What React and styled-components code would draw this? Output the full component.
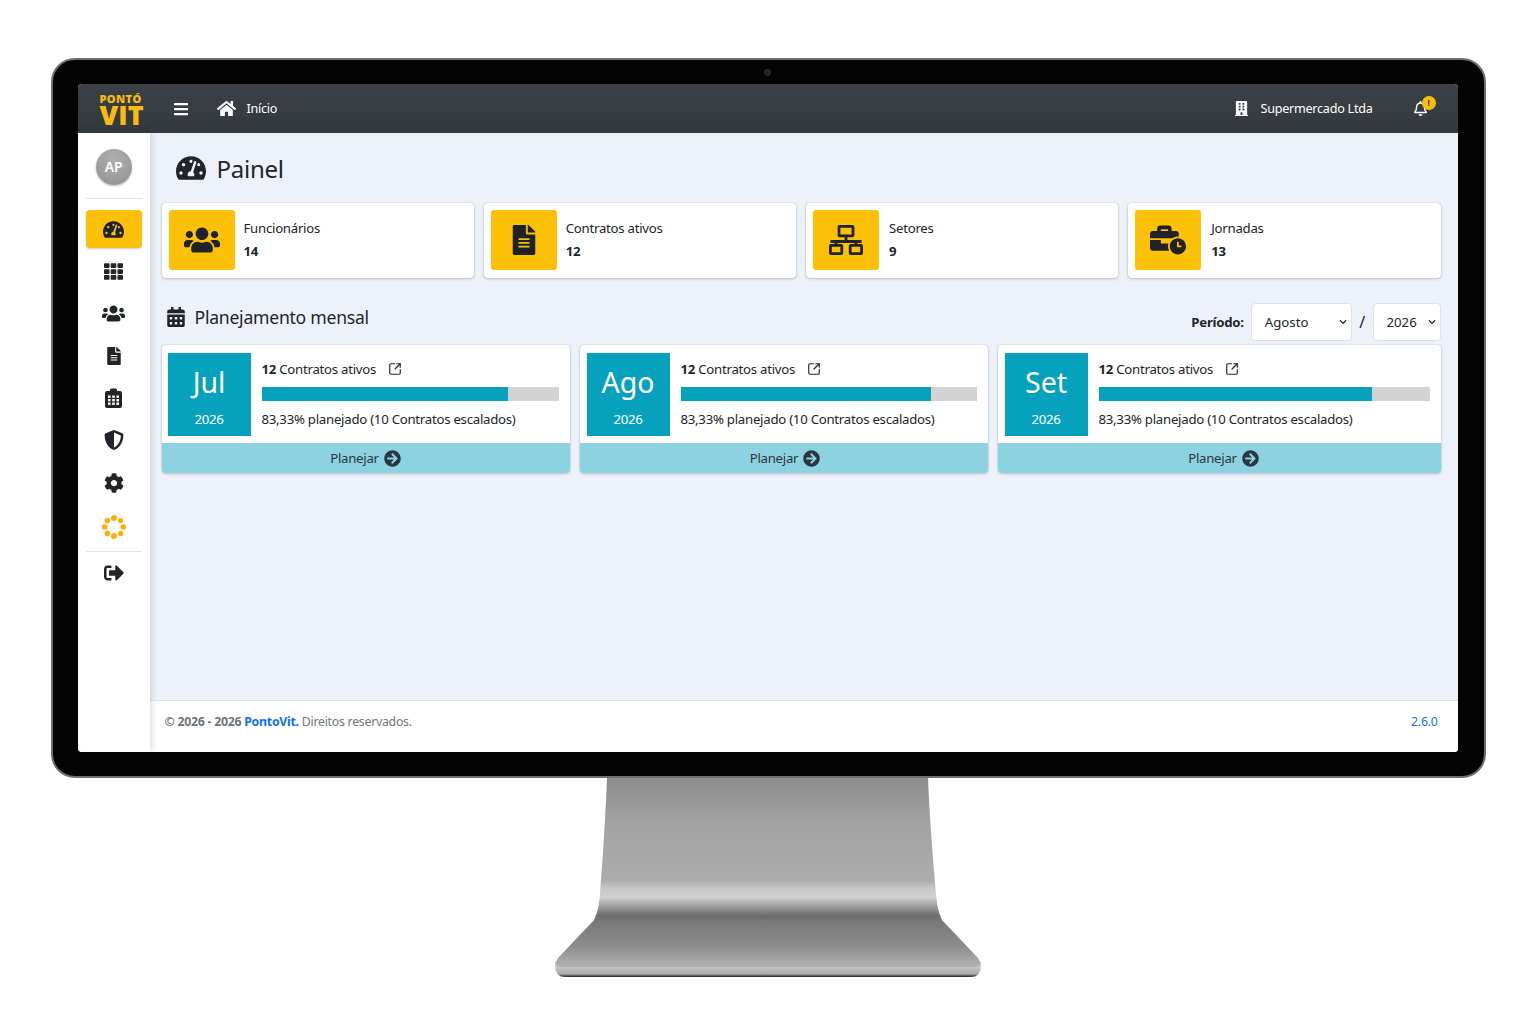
import React from "react";
import styled, { createGlobalStyle } from "styled-components";
import { SquareArrowOutUpRight } from "lucide-react";
import {
  FaArrowCircleRight,
  FaBars,
  FaBuilding,
  FaBusinessTime,
  FaCalendarAlt,
  FaChevronDown,
  FaCog,
  FaFileAlt,
  FaHome,
  FaRegBell,
  FaShieldAlt,
  FaSignOutAlt,
  FaTachometerAlt,
  FaTh,
  FaUsers,
} from "react-icons/fa";

const ClipboardGrid = () => (
  <svg width="17" height="20" viewBox="0 0 17 20" fill="currentColor">
    <path d="M2 3h3V2a1.5 1.5 0 0 1 1.5-1.5h4A1.5 1.5 0 0 1 12 2v1h3a2 2 0 0 1 2 2v13a2 2 0 0 1-2 2H2a2 2 0 0 1-2-2V5a2 2 0 0 1 2-2z" />
    <g fill="#fff">
      <rect x="3" y="7.5" width="2.6" height="2.4" />
      <rect x="7.2" y="7.5" width="2.6" height="2.4" />
      <rect x="11.4" y="7.5" width="2.6" height="2.4" />
      <rect x="3" y="11" width="2.6" height="2.4" />
      <rect x="7.2" y="11" width="2.6" height="2.4" />
      <rect x="11.4" y="11" width="2.6" height="2.4" />
      <rect x="3" y="14.5" width="2.6" height="2.4" />
      <rect x="7.2" y="14.5" width="2.6" height="2.4" />
      <rect x="11.4" y="14.5" width="2.6" height="2.4" />
    </g>
  </svg>
);

const Spinner = () => (
  <svg width="24" height="24" viewBox="0 0 24 24" fill="#ffad0d">
    <circle cx="12" cy="3" r="3" />
    <circle cx="18.6" cy="5.6" r="2.6" />
    <circle cx="21.2" cy="12" r="2.8" />
    <circle cx="18.6" cy="18.4" r="2.6" />
    <circle cx="12" cy="21" r="3" />
    <circle cx="5.4" cy="18.4" r="2.8" />
    <circle cx="2.8" cy="12" r="2.8" />
    <circle cx="5.4" cy="5.6" r="2.8" />
  </svg>
);

// hollow boxes, the icon package only has the filled one
const Network = () => (
  <svg
    width="34"
    height="30"
    viewBox="0 0 34 30"
    fill="none"
    stroke="currentColor"
    strokeWidth="2.8"
  >
    <rect x="10" y="1.4" width="14" height="9.5" rx="0.6" />
    <path d="M17 11v5M1.5 16.5h31M7 16.5v4M27 16.5v4" />
    <rect x="1.4" y="20.4" width="11.4" height="8.2" rx="0.6" />
    <rect x="21.2" y="20.4" width="11.4" height="8.2" rx="0.6" />
  </svg>
);

const StandDrawing = () => (
  <svg width="426" height="199" viewBox="0 0 426 199">
    <defs>
      <linearGradient id="neck" x1="0" y1="0" x2="0" y2="1">
        <stop offset="0" stopColor="#8c8c8c" />
        <stop offset="0.3" stopColor="#a2a2a2" />
        <stop offset="0.72" stopColor="#acacac" />
        <stop offset="0.78" stopColor="#c8c8c8" />
        <stop offset="0.84" stopColor="#d0d0d0" />
        <stop offset="0.9" stopColor="#a0a0a0" />
        <stop offset="0.97" stopColor="#6c6c6c" />
        <stop offset="1" stopColor="#747474" />
      </linearGradient>
      <linearGradient id="base" x1="0" y1="0" x2="0" y2="1">
        <stop offset="0" stopColor="#757575" />
        <stop offset="0.6" stopColor="#8e8e8e" />
        <stop offset="1" stopColor="#b2b2b2" />
      </linearGradient>
      <linearGradient id="rim" x1="0" y1="0" x2="0" y2="1">
        <stop offset="0" stopColor="#d8d8d8" />
        <stop offset="0.8" stopColor="#acacac" />
        <stop offset="1" stopColor="#222" />
      </linearGradient>
    </defs>
    <path
      d="M0 186 Q0 199 10 199 H416 Q426 199 426 186 L426 183 H0 Z"
      fill="url(#rim)"
    />
    <path
      d="M41 140 L3 180 Q-2 189 6 189 H420 Q428 189 423 180 L385 140 Z"
      fill="url(#base)"
    />
    <path
      d="M52 0 H373 C375 50 379 90 381 116 C382 128 384 136 387 142 H39 C42 136 44 128 45 116 C47 90 50 50 52 0 Z"
      fill="url(#neck)"
    />
  </svg>
);

const stats = [
  { label: "Funcionários", value: 14, icon: <FaUsers size={36} /> },
  { label: "Contratos ativos", value: 12, icon: <FaFileAlt size={30} /> },
  { label: "Setores", value: 9, icon: <Network /> },
  { label: "Jornadas", value: 13, icon: <FaBusinessTime size={36} /> },
];

const months = [
  { month: "Jul", inset: 6, fill: 83, nudge: 0 },
  { month: "Ago", inset: 7, fill: 84.5, nudge: 3 },
  { month: "Set", inset: 7, fill: 82.5, nudge: 9 },
];

const navIcons = [
  <FaTachometerAlt size={21} />,
  <FaTh size={19} />,
  <FaUsers size={23} />,
  <FaFileAlt size={18} />,
  <ClipboardGrid />,
  <FaShieldAlt size={20} />,
  <FaCog size={20} />,
  <Spinner />,
];

const App = () => (
  <Page>
    <GlobalStyle />
    <Monitor>
      <Camera />
      <Screen>
        <TopBar>
          <Logo>
            <LogoTop>PONTÓ</LogoTop>
            <LogoBottom>VIT</LogoBottom>
          </Logo>
          <TopLeft>
            <FaBars size={16} />
            <HomeLink>
              <FaHome size={19} />
              <span>Início</span>
            </HomeLink>
          </TopLeft>
          <TopRight>
            <Company>
              <FaBuilding size={15} />
              <span>Supermercado Ltda</span>
            </Company>
            <BellWrap>
              <FaRegBell size={15} />
              <BellBadge>!</BellBadge>
            </BellWrap>
          </TopRight>
        </TopBar>
        <Body>
          <SideBar>
            <Avatar>AP</Avatar>
            <SideRule />
            <NavList>
              {navIcons.map((icon, i) => (
                <NavItem key={i} $active={i === 0}>
                  {icon}
                </NavItem>
              ))}
            </NavList>
            <SideRuleLow />
            <NavItem>
              <FaSignOutAlt size={20} />
            </NavItem>
          </SideBar>
          <Main>
            <Content>
              <PageTitle>
                <FaTachometerAlt size={30} />
                <h1>Painel</h1>
              </PageTitle>
              <StatGrid>
                {stats.map((s) => (
                  <StatCard key={s.label}>
                    <StatIcon>{s.icon}</StatIcon>
                    <StatText>
                      <span>{s.label}</span>
                      <strong>{s.value}</strong>
                    </StatText>
                  </StatCard>
                ))}
              </StatGrid>
              <PlanHeader>
                <PlanTitle>
                  <FaCalendarAlt size={20} />
                  <h2>Planejamento mensal</h2>
                </PlanTitle>
                <Period>
                  <strong>Período:</strong>
                  <SelectWrap $width={101}>
                    <Select defaultValue="Agosto">
                      <option>Julho</option>
                      <option>Agosto</option>
                      <option>Setembro</option>
                    </Select>
                    <FaChevronDown size={8} />
                  </SelectWrap>
                  <Slash>/</Slash>
                  <SelectWrap $width={68}>
                    <Select defaultValue="2026">
                      <option>2025</option>
                      <option>2026</option>
                    </Select>
                    <FaChevronDown size={8} />
                  </SelectWrap>
                </Period>
              </PlanHeader>
              <MonthGrid>
                {months.map((m) => (
                  <MonthCard key={m.month}>
                    <MonthBody $inset={m.inset}>
                      <MonthTile>
                        <span>{m.month}</span>
                        <small>2026</small>
                      </MonthTile>
                      <MonthInfo>
                        <MonthCount>
                          <span>
                            <strong>12</strong> Contratos ativos
                          </span>
                          <SquareArrowOutUpRight size={14} />
                        </MonthCount>
                        <Progress>
                          <ProgressFill style={{ width: `${m.fill}%` }} />
                        </Progress>
                        <MonthNote>
                          83,33% planejado (10 Contratos escalados)
                        </MonthNote>
                      </MonthInfo>
                    </MonthBody>
                    <PlanLink $nudge={m.nudge}>
                      Planejar <FaArrowCircleRight size={17} />
                    </PlanLink>
                  </MonthCard>
                ))}
              </MonthGrid>
            </Content>
            <Footer>
              <span>
                <b>© 2026 - 2026 </b>
                <FooterBrand>PontoVit.</FooterBrand> Direitos reservados.
              </span>
              <Version>2.6.0</Version>
            </Footer>
          </Main>
        </Body>
      </Screen>
    </Monitor>
    <StandDrawing />
  </Page>
);

export default App;

const GlobalStyle = createGlobalStyle`
  * {
    box-sizing: border-box;
  }
  body {
    margin: 0;
    background: #fff;
    font-family: "Noto Sans", "Open Sans", sans-serif;
    font-size: 13.2px;
    letter-spacing: -0.25px;
    color: #212529;
  }
`;

const Page = styled.div`
  width: 1536px;
  height: 1024px;
  padding-top: 58px;
  display: flex;
  flex-direction: column;
  align-items: center;
  background: #fff;

  & > svg {
    display: block;
    overflow: visible;
  }
`;

const Monitor = styled.div`
  position: relative;
  width: 1435px;
  height: 720px;
  padding: 26px 27px;
  background: #040404;
  border: 2px solid #6f6f6f;
  border-radius: 24px;
`;

const Camera = styled.i`
  position: absolute;
  top: 9px;
  left: 711px;
  width: 7px;
  height: 7px;
  border-radius: 50%;
  background: #222;
  border: 1px solid #333;
`;

const Screen = styled.div`
  width: 1380px;
  height: 668px;
  display: flex;
  flex-direction: column;
  margin: -2px 0 0 -2px;
  border-radius: 4px;
  overflow: hidden;
  background: #fff;
`;

const TopBar = styled.header`
  height: 49px;
  flex-shrink: 0;
  display: flex;
  align-items: center;
  background: linear-gradient(#3c4147, #33383d);
  color: #fff;
  font-size: 12.6px;
`;

const Logo = styled.div`
  width: 72px;
  padding: 1px 0 0 22px;
  display: flex;
  flex-direction: column;
  color: #f9bc0d;
  font-family: "Open Sans", sans-serif;
  font-weight: 800;
  letter-spacing: 0;
`;

const LogoTop = styled.span`
  font-size: 11px;
  line-height: 11px;
  letter-spacing: 0.4px;
`;

const LogoBottom = styled.span`
  font-size: 27px;
  line-height: 21px;
`;

const TopLeft = styled.div`
  margin-left: 23px;
  display: flex;
  align-items: center;
  gap: 28px;
`;

const HomeLink = styled.div`
  display: flex;
  align-items: center;
  gap: 11px;
`;

const TopRight = styled.div`
  margin-left: auto;
  padding-right: 30px;
  display: flex;
  align-items: center;
  gap: 40px;
`;

const Company = styled.div`
  display: flex;
  align-items: center;
  gap: 11px;
`;

const BellWrap = styled.div`
  position: relative;
  display: flex;
`;

const BellBadge = styled.span`
  position: absolute;
  top: -5px;
  left: 9px;
  width: 14px;
  height: 14px;
  border-radius: 50%;
  background: #f9bc0d;
  color: #333;
  font-size: 8px;
  font-weight: 700;
  line-height: 14px;
  text-align: center;
`;

const Body = styled.div`
  flex: 1;
  min-height: 0;
  display: flex;
`;

const SideBar = styled.nav`
  width: 72px;
  flex-shrink: 0;
  padding: 16px 8px 0;
  display: flex;
  flex-direction: column;
  align-items: stretch;
  background: #fff;
  box-shadow: 2px 0 6px rgba(60, 70, 90, 0.18);
  z-index: 1;
`;

const Avatar = styled.div`
  width: 36px;
  height: 36px;
  margin: 0 auto;
  border-radius: 50%;
  background: radial-gradient(circle at 50% 30%, #b0b0b0, #8f8f8f);
  box-shadow: 0 1px 2px rgba(0, 0, 0, 0.3);
  color: #fff;
  font-weight: 600;
  font-size: 14px;
  line-height: 36px;
  text-align: center;
`;

const SideRule = styled.hr`
  width: 100%;
  margin: 13px 0 11px;
  border: 0;
  border-top: 1px solid #dfe3e8;
`;

const SideRuleLow = styled(SideRule)`
  margin: 5px 0 2px;
`;

const NavList = styled.div`
  display: flex;
  flex-direction: column;
  gap: 4.3px;

  & > div:last-child {
    margin-top: 1.6px;
  }
`;

const NavItem = styled.div`
  height: 38px;
  display: flex;
  align-items: center;
  justify-content: center;
  border-radius: 4px;
  color: #212529;
  background: ${(p) => (p.$active ? "#fcc006" : "transparent")};
  box-shadow: ${(p) => (p.$active ? "0 1px 2px rgba(0,0,0,.2)" : "none")};
`;

const Main = styled.main`
  flex: 1;
  min-width: 0;
  display: flex;
  flex-direction: column;
  background: #edf2fa;
`;

const Content = styled.div`
  flex: 1;
  padding: 0 17px 0 12px;
`;

const PageTitle = styled.div`
  height: 70px;
  padding-left: 14px;
  display: flex;
  align-items: center;
  gap: 11px;

  h1 {
    margin: 0;
    font-size: 24px;
    font-weight: 400;
  }
`;

const StatGrid = styled.div`
  display: grid;
  grid-template-columns: repeat(4, 1fr);
  gap: 10px;
`;

const StatCard = styled.div`
  height: 75px;
  padding: 7px;
  display: flex;
  align-items: stretch;
  gap: 9px;
  background: #fff;
  border-radius: 4px;
  box-shadow: 0 0 1px rgba(0, 0, 0, 0.3), 0 1px 3px rgba(0, 0, 0, 0.2);

  &:nth-child(n + 3) {
    gap: 10px;
  }
`;

const StatIcon = styled.div`
  width: 66px;
  height: 60px;
  display: flex;
  align-items: center;
  justify-content: center;
  border-radius: 3px;
  background: #fcc006;
  color: #1f2328;
`;

const StatText = styled.div`
  display: flex;
  flex-direction: column;
  justify-content: center;
  gap: 6px;
  padding-bottom: 2px;
  line-height: 17px;

  strong {
    font-weight: 700;
  }
`;

const PlanHeader = styled.div`
  height: 67px;
  padding: 25px 0 4px 4px;
  display: flex;
  align-items: center;
  justify-content: space-between;
`;

const PlanTitle = styled.div`
  margin-bottom: 10px;
  display: flex;
  align-items: center;
  gap: 9px;

  h2 {
    margin: 0;
    font-size: 17.6px;
    font-weight: 400;
  }
`;

const Period = styled.div`
  display: flex;
  align-items: center;
  gap: 7px;
`;

const Slash = styled.span`
  font-size: 16px;
  margin: 0 0.5px;
`;

const SelectWrap = styled.div`
  position: relative;
  width: ${(p) => p.$width}px;

  svg {
    position: absolute;
    top: 15px;
    right: 5px;
    pointer-events: none;
  }
`;

const Select = styled.select`
  width: 100%;
  height: 38px;
  padding: 0 13px;
  appearance: none;
  background: #fff;
  border: 1px solid #dee2e6;
  border-radius: 4px;
  font: inherit;
  color: #212529;
`;

const MonthGrid = styled.div`
  display: grid;
  grid-template-columns: 408px 408px 1fr;
  gap: 10px;
`;

const MonthCard = styled.div`
  height: 128px;
  display: flex;
  flex-direction: column;
  border-radius: 4px;
  overflow: hidden;
  background: #fff;
  box-shadow: 0 0 1px rgba(0, 0, 0, 0.3), 0 1px 3px rgba(0, 0, 0, 0.2);
`;

const MonthBody = styled.div`
  flex: 1;
  padding: 8px 11px 7px ${(p) => p.$inset}px;
  display: flex;
  gap: 11px;
`;

const MonthTile = styled.div`
  width: 83px;
  height: 83px;
  flex-shrink: 0;
  display: flex;
  flex-direction: column;
  align-items: center;
  background: #06a2bd;
  color: #fff;

  span {
    margin-top: 11px;
    font-size: 28.5px;
    line-height: 36px;
    letter-spacing: 0;
  }

  small {
    margin-top: 10px;
    font-size: 13.2px;
    line-height: 18px;
  }
`;

const MonthInfo = styled.div`
  flex: 1;
  min-width: 0;
`;

const MonthCount = styled.div`
  height: 34px;
  display: flex;
  align-items: center;
  gap: 12px;
  padding-bottom: 2px;
`;

const Progress = styled.div`
  height: 14px;
  background: #d3d3d3;
`;

const ProgressFill = styled.div`
  height: 100%;
  background: #06a2bd;
`;

const MonthNote = styled.div`
  margin-top: 9px;
  line-height: 18px;
`;

const PlanLink = styled.div`
  height: 30px;
  padding-left: ${(p) => p.$nudge}px;
  display: flex;
  align-items: center;
  justify-content: center;
  gap: 5px;
  background: #8dd2e0;
  color: #2a3740;
`;

const Footer = styled.footer`
  height: 52px;
  flex-shrink: 0;
  padding: 0 20px 10px 15px;
  display: flex;
  align-items: center;
  justify-content: space-between;
  background: #fff;
  border-top: 1px solid #dee2e6;
  color: #6c757d;
  font-size: 12.3px;
`;

const FooterBrand = styled.b`
  color: #0d6efd;
`;

const Version = styled.span`
  color: #0d6efd;
`;
